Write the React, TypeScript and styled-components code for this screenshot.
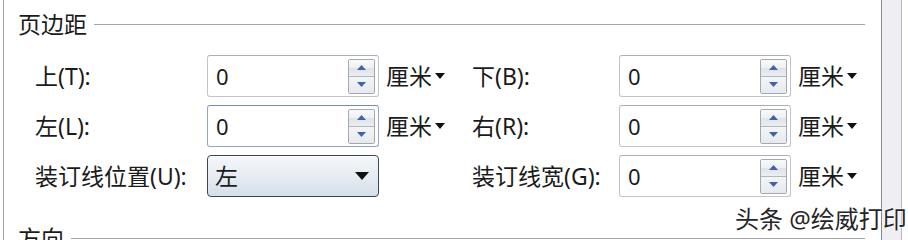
import React from "react";
import styled, { createGlobalStyle } from "styled-components";

const GlobalStyle = createGlobalStyle`
  html, body {
    margin: 0;
    padding: 0;
    background: #ffffff;
  }
  body {
    font-family: "Noto Sans", "Noto Sans CJK SC", sans-serif;
    color: #1b1b1b;
  }
`;

const Window = styled.div`
  position: relative;
  width: 908px;
  height: 240px;
  overflow: hidden;
  display: flex;
  background: #ffffff;
`;

const Panel = styled.div`
  flex: 0 0 878px;
  margin-left: 3px;
  border-left: 1px solid #a6a6b4;
  padding: 9px 16px 0 14px;
  box-sizing: border-box;
`;

const ScrollStrip = styled.div`
  flex: 0 0 19px;
  background: #efeff3;
  border-left: 1px solid #858592;
  border-right: 1px solid #b5b5be;
`;

const SectionHeader = styled.div<{ $gap?: number }>`
  display: flex;
  align-items: center;
  height: 30px;
  margin-top: ${(p) => p.$gap ?? 0}px;
`;

const SectionTitle = styled.span`
  font-size: 23px;
  line-height: 30px;
  white-space: nowrap;
`;

const Rule = styled.div`
  flex: 1;
  height: 1px;
  margin-left: 7px;
  background: #a4a6ab;
  box-shadow: 0 1px 0 #ffffff;
`;

const FormGrid = styled.div`
  display: grid;
  grid-template-columns: 172px 172px 93px 147px 172px auto;
  grid-auto-rows: 42px;
  row-gap: 8px;
  margin: 16px 0 0 17px;
`;

const Label = styled.div`
  display: flex;
  align-items: center;
  font-size: 23px;
  line-height: 30px;
  white-space: nowrap;
`;

const InputBox = styled.div<{ $focused?: boolean }>`
  display: flex;
  align-items: center;
  box-sizing: border-box;
  width: 172px;
  height: 42px;
  padding: 0 3px 0 8px;
  background: #ffffff;
  border: 1px solid ${(p) => (p.$focused ? "#8aa9cc" : "#c0c3ca")};
  border-top-color: ${(p) => (p.$focused ? "#6f91b8" : "#abafb8")};
  border-radius: 3px;
`;

const Value = styled.span`
  flex: 1;
  font-size: 22px;
  line-height: 30px;
`;

const Spinner = styled.div`
  display: flex;
  flex-direction: column;
  width: 27px;
  height: 35px;
  box-sizing: border-box;
  border: 1px solid #a3a8b1;
  border-radius: 2px;
  overflow: hidden;
`;

const SpinButton = styled.div<{ $up?: boolean }>`
  flex: 1;
  display: flex;
  align-items: center;
  justify-content: center;
  background: ${(p) =>
    p.$up
      ? "linear-gradient(#f8f9fb 0%, #eef0f3 50%, #dfe3e9 52%, #eaedf1 100%)"
      : "linear-gradient(#f3f5f7 0%, #e6e9ee 100%)"};
  border-bottom: ${(p) => (p.$up ? "1px solid #b2b7bf" : "none")};
`;

const UnitCell = styled.div`
  display: flex;
  align-items: center;
  padding-left: 7px;
  font-size: 23px;
  line-height: 30px;
  white-space: nowrap;
`;

const Combo = styled.div`
  display: flex;
  align-items: center;
  justify-content: space-between;
  box-sizing: border-box;
  width: 172px;
  height: 42px;
  padding: 0 9px 0 7px;
  border: 1px solid #3d4752;
  border-radius: 4px;
  background: linear-gradient(#f4f7fa 0%, #e6ecf2 50%, #d5dfe9 100%);
  box-shadow: inset 0 1px 0 #ffffff;
  font-size: 23px;
  line-height: 30px;
`;

const Watermark = styled.div`
  position: absolute;
  left: 735px;
  top: 204px;
  font-size: 24px;
  line-height: 30px;
  color: #262626;
  white-space: nowrap;
  text-shadow: 0 0 2px #ffffff, 0 0 3px #ffffff;
`;

function Triangle({ up, color, w, h }: { up?: boolean; color: string; w: number; h: number }) {
  return (
    <svg width={w} height={h} viewBox={`0 0 ${w} ${h}`}>
      <polygon points={up ? `0,${h} ${w / 2},0 ${w},${h}` : `0,0 ${w},0 ${w / 2},${h}`} fill={color} />
    </svg>
  );
}

function SpinField({ value, focused }: { value: string; focused?: boolean }) {
  return (
    <InputBox $focused={focused}>
      <Value>{value}</Value>
      <Spinner>
        <SpinButton $up>
          <Triangle up color="#4262a6" w={9} h={5} />
        </SpinButton>
        <SpinButton>
          <Triangle color="#4262a6" w={9} h={5} />
        </SpinButton>
      </Spinner>
    </InputBox>
  );
}

function Unit() {
  return (
    <UnitCell>
      厘米
      <span style={{ marginLeft: 3, display: "flex" }}>
        <Triangle color="#111111" w={10} h={6} />
      </span>
    </UnitCell>
  );
}

export default function App() {
  return (
    <>
      <GlobalStyle />
      <Window>
        <Panel>
          <SectionHeader>
            <SectionTitle>页边距</SectionTitle>
            <Rule />
          </SectionHeader>
          <FormGrid>
            <Label>上(T):</Label>
            <SpinField value="0" />
            <Unit />
            <Label>下(B):</Label>
            <SpinField value="0" />
            <Unit />

            <Label>左(L):</Label>
            <SpinField value="0" focused />
            <Unit />
            <Label>右(R):</Label>
            <SpinField value="0" />
            <Unit />

            <Label>装订线位置(U):</Label>
            <Combo>
              左
              <Triangle color="#111111" w={14} h={8} />
            </Combo>
            <div />
            <Label>装订线宽(G):</Label>
            <SpinField value="0" />
            <Unit />
          </FormGrid>
          <SectionHeader $gap={26}>
            <SectionTitle>方向</SectionTitle>
            <Rule />
          </SectionHeader>
        </Panel>
        <ScrollStrip />
        <Watermark>头条 @绘威打印</Watermark>
      </Window>
    </>
  );
}
